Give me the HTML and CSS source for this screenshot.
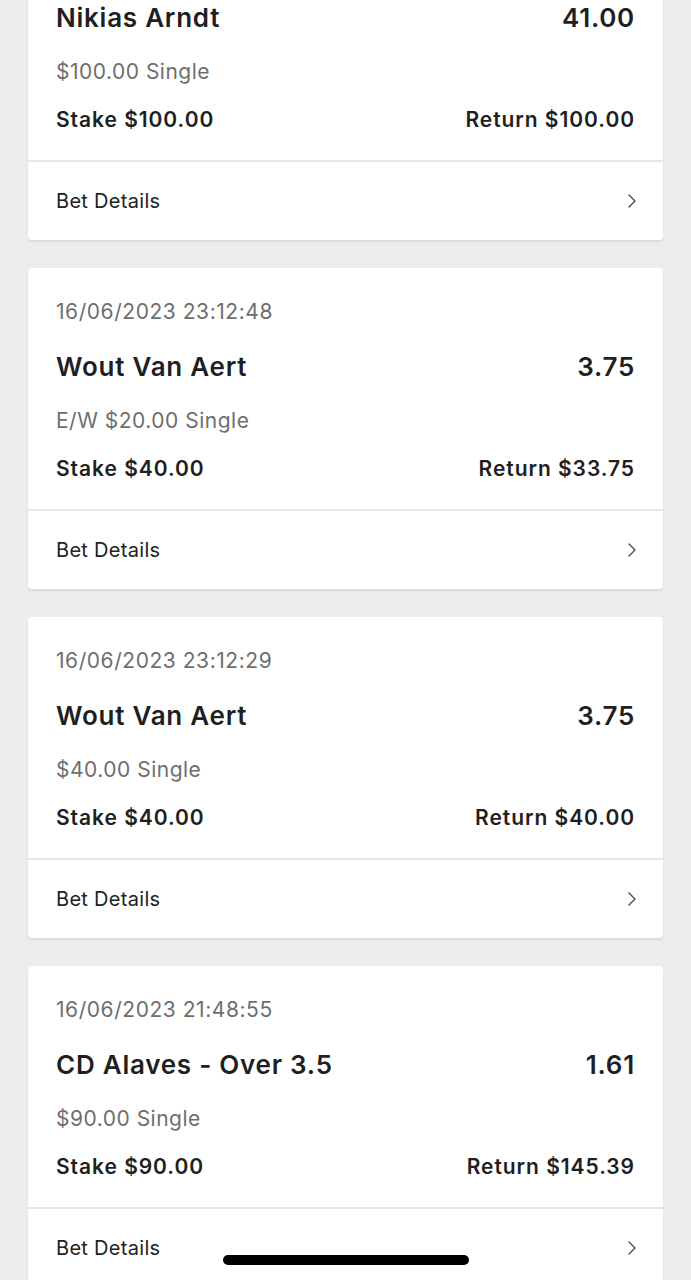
FILE: index.html
```html
<!DOCTYPE html>
<html lang="en">
<head>
    <meta charset="UTF-8">
    <meta name="viewport" content="width=device-width, initial-scale=1.0">
    <title>My Bets</title>
    <link rel="stylesheet" href="styles.css">
</head>
<body>
    <div class="bet-list">
        <div class="bet-card">
            <div class="bet-body">
                <div class="bet-date">16/06/2023 23:40:12</div>
                <div class="bet-row bet-title">
                    <span>Nikias Arndt</span>
                    <span>41.00</span>
                </div>
                <div class="bet-type">$100.00 Single</div>
                <div class="bet-row bet-money">
                    <span>Stake $100.00</span>
                    <span>Return $100.00</span>
                </div>
            </div>
            <a class="bet-details" href="#">
                <span>Bet Details</span>
                <svg class="chevron" viewBox="0 0 10 16" width="10" height="16"><path d="M2 2l6 6-6 6" fill="none" stroke="#4a4a4a" stroke-width="1.4" stroke-linecap="round" stroke-linejoin="round"/></svg>
            </a>
        </div>

        <div class="bet-card">
            <div class="bet-body">
                <div class="bet-date">16/06/2023 23:12:48</div>
                <div class="bet-row bet-title">
                    <span>Wout Van Aert</span>
                    <span>3.75</span>
                </div>
                <div class="bet-type">E/W $20.00 Single</div>
                <div class="bet-row bet-money">
                    <span>Stake $40.00</span>
                    <span>Return $33.75</span>
                </div>
            </div>
            <a class="bet-details" href="#">
                <span>Bet Details</span>
                <svg class="chevron" viewBox="0 0 10 16" width="10" height="16"><path d="M2 2l6 6-6 6" fill="none" stroke="#4a4a4a" stroke-width="1.4" stroke-linecap="round" stroke-linejoin="round"/></svg>
            </a>
        </div>

        <div class="bet-card">
            <div class="bet-body">
                <div class="bet-date">16/06/2023 23:12:29</div>
                <div class="bet-row bet-title">
                    <span>Wout Van Aert</span>
                    <span>3.75</span>
                </div>
                <div class="bet-type">$40.00 Single</div>
                <div class="bet-row bet-money">
                    <span>Stake $40.00</span>
                    <span>Return $40.00</span>
                </div>
            </div>
            <a class="bet-details" href="#">
                <span>Bet Details</span>
                <svg class="chevron" viewBox="0 0 10 16" width="10" height="16"><path d="M2 2l6 6-6 6" fill="none" stroke="#4a4a4a" stroke-width="1.4" stroke-linecap="round" stroke-linejoin="round"/></svg>
            </a>
        </div>

        <div class="bet-card">
            <div class="bet-body">
                <div class="bet-date">16/06/2023 21:48:55</div>
                <div class="bet-row bet-title">
                    <span>CD Alaves - Over 3.5</span>
                    <span>1.61</span>
                </div>
                <div class="bet-type">$90.00 Single</div>
                <div class="bet-row bet-money">
                    <span>Stake $90.00</span>
                    <span>Return $145.39</span>
                </div>
            </div>
            <a class="bet-details" href="#">
                <span>Bet Details</span>
                <svg class="chevron" viewBox="0 0 10 16" width="10" height="16"><path d="M2 2l6 6-6 6" fill="none" stroke="#4a4a4a" stroke-width="1.4" stroke-linecap="round" stroke-linejoin="round"/></svg>
            </a>
        </div>
    </div>

    <!-- iOS home indicator -->
    <div class="home-bar"></div>
</body>
</html>
```

FILE: styles.css
```css
body {
    font-family: Inter, "Noto Sans", Arial, sans-serif;
    background-color: #ebecee;
    color: #222;
    margin: 0;
    overflow: hidden;
}
.bet-list {
    display: flex;
    flex-direction: column;
    gap: 28px;
    padding: 0 28px;
    margin-top: -81px; /* list is scrolled, first card starts above the fold */
}
.bet-card {
    background-color: #fff;
    border-radius: 4px;
    box-shadow: 0 2px 2px rgba(0, 0, 0, 0.08);
}
.bet-body {
    padding: 28px 28px 25px;
}
.bet-date {
    font-size: 21px;
    line-height: 32px;
    letter-spacing: 0.55px;
    color: #6e6e6e;
}
.bet-row {
    display: flex;
    justify-content: space-between;
    align-items: center;
}
.bet-title {
    margin-top: 22px;
    font-size: 26px;
    line-height: 34px;
    letter-spacing: 0.75px;
    font-weight: 600;
    color: #1f1f1f;
}
.bet-type {
    margin-top: 22px;
    font-size: 21px;
    line-height: 30px;
    letter-spacing: 0.5px;
    color: #6e6e6e;
}
.bet-money {
    margin-top: 18px;
    font-size: 21px;
    line-height: 30px;
    letter-spacing: 0.95px;
    font-weight: 600;
    color: #1f1f1f;
}
.bet-details {
    display: flex;
    justify-content: space-between;
    align-items: center;
    height: 78px;
    padding: 0 28px;
    border-top: 2px solid #e6e6e8;
    font-size: 20px;
    letter-spacing: 0.3px;
    color: #222;
    text-decoration: none;
}
.chevron {
    margin-right: -2px;
}
.home-bar {
    position: fixed;
    left: 223px;
    bottom: 15px;
    width: 246px;
    height: 10px;
    border-radius: 5px;
    background-color: #000;
}
```
